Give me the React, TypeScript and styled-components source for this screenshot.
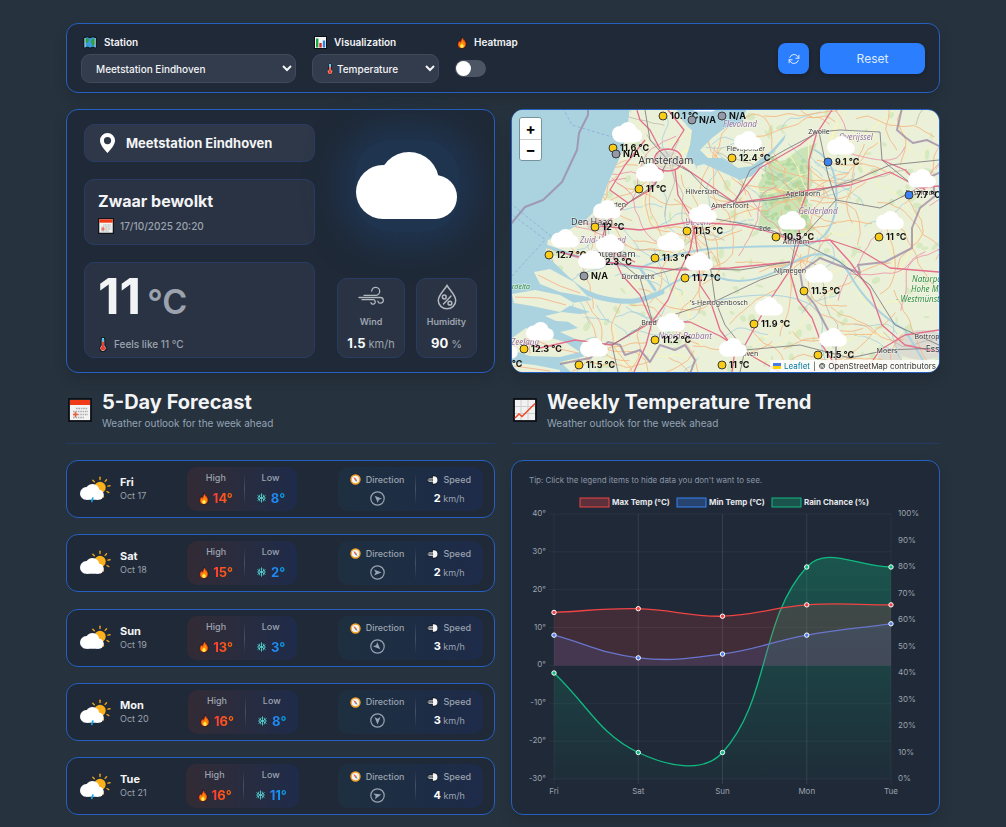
import React from 'react';
import styled, { createGlobalStyle } from 'styled-components';

const GlobalStyle = createGlobalStyle`
  *, *::before, *::after { box-sizing: border-box; }
  body {
    margin: 0;
    min-height: 100vh;
    background: #26323d;
    color: #f3f4f6;
    font-family: Inter, "Liberation Sans", sans-serif;
    font-size: 11px;
  }
  h1, h2, p, ul { margin: 0; padding: 0; }
  button, select, input { font-family: inherit; }
  svg { display: block; flex: none; }
`;

const Page = styled.main`
  display: flex;
  flex-direction: column;
  gap: 16px;
  padding: 23px 66px 12px;
`;

const Panel = styled.section`
  background: #1f2937;
  border: 1px solid #2560c0;
  border-radius: 12px;
  box-shadow: 0 6px 14px rgba(0, 0, 0, 0.14);
`;

/* ---------- toolbar ---------- */

const Toolbar = styled(Panel)`
  display: flex;
  align-items: center;
  gap: 16px;
  padding: 10px 14px 9px;
`;

const Field = styled.div<{ $width?: number }>`
  display: flex;
  flex-direction: column;
  gap: 4px;
  width: ${(p) => (p.$width ? `${p.$width}px` : 'auto')};
`;

const FieldLabel = styled.label`
  display: flex;
  align-items: center;
  gap: 7px;
  height: 16px;
  padding-left: 2px;
  font-weight: 600;
  font-size: 10px;
`;

const SelectWrap = styled.div`
  position: relative;
`;

const SelectIcon = styled.span`
  position: absolute;
  left: 14px;
  top: 9px;
  pointer-events: none;
`;

const Select = styled.select<{ $icon?: boolean }>`
  width: 100%;
  height: 29px;
  padding: 0 0 0 ${(p) => (p.$icon ? 20 : 10)}px;
  border: 1px solid #3f4a5b;
  border-radius: 9px;
  background-color: #323c4d;
  color: #f3f4f6;
  font-size: 10px;
  font-weight: 500;
`;

const ToggleSlot = styled.div`
  display: flex;
  align-items: center;
  height: 29px;
`;

const Toggle = styled.input`
  appearance: none;
  width: 31px;
  height: 17px;
  margin: 0;
  padding: 1px;
  border-radius: 9px;
  background: #4b5563;
  &::before {
    content: '';
    display: block;
    width: 15px;
    height: 15px;
    border-radius: 50%;
    background: #fff;
  }
  &:checked { background: #2b7fff; }
  &:checked::before { margin-left: 14px; }
`;

const Actions = styled.div`
  display: flex;
  gap: 11px;
  margin-left: auto;
`;

const Button = styled.button<{ $wide?: boolean }>`
  display: flex;
  align-items: center;
  justify-content: center;
  width: ${(p) => (p.$wide ? 105 : 31)}px;
  height: 31px;
  padding: 0;
  border: 0;
  border-radius: 8px;
  background: #2b7fff;
  color: #dce8ff;
  font-size: 12px;
  font-weight: 400;
  box-shadow: 0 2px 4px rgba(0, 0, 0, 0.2);
`;

/* ---------- layout of the two columns ---------- */

const Columns = styled.div`
  display: grid;
  grid-template-columns: minmax(0, 1fr) minmax(0, 1fr);
  gap: 16px;
`;

/* ---------- current weather ---------- */

const Current = styled(Panel)`
  display: flex;
  justify-content: space-between;
  gap: 22px;
  padding: 14px 17px;
`;

const CurrentLeft = styled.div`
  display: flex;
  flex-direction: column;
  flex: 1;
  gap: 17px;
`;

const CurrentRight = styled.div`
  display: flex;
  flex-direction: column;
  justify-content: space-between;
  width: 140px;
`;

const Tile = styled.div`
  display: flex;
  flex-direction: column;
  justify-content: center;
  padding: 0 13px;
  background: #2a3343;
  border: 1px solid #293d63;
  border-radius: 10px;
`;

const StationTile = styled(Tile)`
  flex-direction: row;
  align-items: center;
  justify-content: flex-start;
  gap: 9px;
  height: 38px;
  background: #2e3848;
  font-size: 13px;
  font-weight: 700;
`;

const SkyTile = styled(Tile)`
  height: 66px;
  gap: 6px;
`;

const TempTile = styled(Tile)`
  height: 96px;
  gap: 6px;
`;

const SkyName = styled.h1`
  font-size: 16px;
  line-height: 22px;
  font-weight: 700;
`;

const Muted = styled.p`
  display: flex;
  align-items: center;
  gap: 6px;
  line-height: 16px;
  color: #9ca3af;
  font-size: 10px;
  font-weight: 500;
`;

const Temp = styled.p`
  display: flex;
  align-items: baseline;
  gap: 6px;
  line-height: 56px;
  font-size: 50px;
  font-weight: 700;
`;

const TempUnit = styled.span`
  color: #9ca3af;
  font-size: 34px;
  font-weight: 600;
`;

const Glow = styled.div`
  display: flex;
  align-items: center;
  justify-content: center;
  height: 92px;
  margin: 16px 18px 0;
  border-radius: 36px;
  background: #1f344f;
  box-shadow: 0 0 32px 16px #1f344f;
`;

const Stats = styled.div`
  display: flex;
  justify-content: space-between;
`;

const Stat = styled(Tile)<{ $width: number }>`
  align-items: center;
  justify-content: flex-start;
  gap: 6px;
  width: ${(p) => p.$width}px;
  height: 80px;
  padding: 5px 0 0;
`;

const StatLabel = styled.span`
  color: #9ca3af;
  font-size: 9px;
  line-height: 12px;
  font-weight: 600;
`;

const StatValue = styled.span`
  color: #9ca3af;
  font-size: 11px;
  line-height: 18px;
  strong {
    color: #f9fafb;
    font-size: 13px;
    font-weight: 700;
  }
`;

/* ---------- map ---------- */

const MapPanel = styled(Panel)`
  position: relative;
  overflow: hidden;
  height: 264px;
`;

const MapSvg = styled.svg`
  width: 100%;
  height: 100%;
`;

const ZoomControl = styled.div`
  position: absolute;
  top: 7px;
  left: 7px;
  display: flex;
  flex-direction: column;
  border: 1px solid rgba(0, 0, 0, 0.3);
  border-radius: 3px;
  overflow: hidden;
`;

const ZoomButton = styled.button`
  width: 21px;
  height: 21px;
  padding: 0;
  border: 0;
  background: #fff;
  color: #000;
  font-size: 15px;
  line-height: 18px;
  font-weight: 700;
  & + & { border-top: 1px solid #ccc; }
`;

const Attribution = styled.div`
  position: absolute;
  right: 0;
  bottom: 0;
  display: flex;
  align-items: center;
  gap: 3px;
  height: 12px;
  padding: 0 3px;
  background: rgba(255, 255, 255, 0.8);
  color: #333;
  font-size: 8px;
  a { color: #0078a8; text-decoration: none; }
`;

/* ---------- section headings ---------- */

const SectionHead = styled.header`
  display: flex;
  align-items: center;
  gap: 10px;
  height: 55px;
  padding: 0 2px 12px;
  border-bottom: 1px solid #253a60;
`;

const SectionTitle = styled.h2`
  font-size: 20px;
  line-height: 26px;
  font-weight: 700;
`;

const SectionSub = styled.p`
  color: #94a3b5;
  font-size: 10px;
  line-height: 16px;
`;

/* ---------- forecast ---------- */

const Forecast = styled.ul`
  display: flex;
  flex-direction: column;
  justify-content: space-between;
  gap: 16px;
  list-style: none;
`;

const Day = styled(Panel).attrs({ as: 'li' })`
  display: flex;
  align-items: center;
  justify-content: space-between;
  height: 58px;
  padding: 0 11px 0 13px;
  box-shadow: none;
`;

const DayInfo = styled.div`
  display: flex;
  align-items: center;
  gap: 9px;
`;

const DayName = styled.p`
  font-size: 11px;
  line-height: 14px;
  font-weight: 700;
`;

const DayDate = styled.p`
  color: #9ca3af;
  font-size: 9px;
  line-height: 14px;
`;

const Pair = styled.div<{ $kind: 'temp' | 'wind' }>`
  display: flex;
  align-items: center;
  gap: 11px;
  height: 44px;
  padding: 0 12px;
  border-radius: 10px;
  background: ${(p) =>
    p.$kind === 'temp'
      ? 'linear-gradient(90deg, #322b35, #282c40 55%, #1e2b4a)'
      : 'linear-gradient(90deg, #1e2f40, #1d2d44 50%, #1e2b4a)'};
`;

const Divider = styled.span`
  width: 1px;
  height: 32px;
  background: linear-gradient(rgba(107, 114, 128, 0), #465066, rgba(107, 114, 128, 0));
`;

const Metric = styled.div`
  display: flex;
  flex-direction: column;
  align-items: center;
  gap: 4px;
`;

const MetricLabel = styled.span`
  display: flex;
  align-items: center;
  gap: 5px;
  color: #9ca3af;
  font-size: 9px;
  line-height: 14px;
  font-weight: 500;
`;

const Degrees = styled.span<{ $from: string; $to: string }>`
  display: flex;
  align-items: center;
  gap: 4px;
  font-size: 13px;
  line-height: 18px;
  font-weight: 700;
  b {
    font-weight: 700;
    color: transparent;
    background: linear-gradient(90deg, ${(p) => p.$from}, ${(p) => p.$to});
    background-clip: text;
  }
`;

const Speed = styled.span`
  color: #9ca3af;
  font-size: 9px;
  line-height: 15px;
  strong { color: #fff; font-size: 11px; }
`;

/* ---------- chart ---------- */

const ChartPanel = styled(Panel)`
  display: flex;
  flex-direction: column;
  padding: 12px 17px 16px;
`;

const Tip = styled.p`
  color: #8d97a6;
  font-size: 8px;
  line-height: 14px;
`;

const ChartSvg = styled.svg`
  width: 100%;
  height: auto;
  margin-top: 7px;
`;

/* ---------- icons ---------- */

const CloudShape = () => (
  <>
    <circle cx="27" cy="40" r="27" />
    <circle cx="53" cy="30" r="30" />
    <circle cx="79" cy="45" r="22" />
    <rect x="27" y="40" width="52" height="27" />
  </>
);

const MapIcon = () => (
  <svg width="14" height="13" viewBox="0 0 14 13">
    <path d="M1 1.5 4.5.8 7 1.8 9.6.8 13 1.5V12l-3.4-.8L7 12.2l-2.5-1L1 12z" fill="#3b9be0" stroke="#0b0f14" strokeWidth="1" />
    <path d="M2 3 4.5 2l1.7 1.2L5.3 6 3.5 7.4 2 5.5zM8 4.5 10 2.5l2.2.7v4L10.6 10 8.8 8.6zM4 9l1.6.6L5 11z" fill="#2f9e44" />
    <path d="M2 2v9.5M12.2 2v9.5" stroke="#d8ecf8" strokeWidth=".8" />
  </svg>
);

const BarsIcon = () => (
  <svg width="13" height="13" viewBox="0 0 13 13">
    <rect x=".5" y=".5" width="12" height="12" fill="#f4f4f4" stroke="#0b0f14" />
    <rect x="2" y="2.5" width="2.4" height="9" fill="#16a34a" />
    <rect x="5.3" y="7" width="2.4" height="4.5" fill="#dc2626" />
    <rect x="8.8" y="4.5" width="2.4" height="7" fill="#2584dd" />
  </svg>
);

const FireIcon = ({ size = 10 }: { size?: number }) => (
  <svg width={size} height={size * 1.3} viewBox="0 0 10 13">
    <path d="M4.600.6C5.400 2.600 8 3.600 9 6.200c1 3-.7 6.300-4 6.300S0 10.200.7 7.400C1 6 1.700 5.400 2 4.200c.7.300 1 .8 1.100 1.400C4 4.200 4.900 2.500 4.600.6z" fill="#f4511e" stroke="#10151c" strokeWidth=".7" />
    <path d="M5.200 3.500C6 5.500 8 6 8 8.500c0 2-1.300 3.300-3 3.300s-3-1.300-3-3.300c0-1 .4-1.500.8-2.300.5.5.7.900.8 1.300.900-.8 1.700-2.200 1.600-4z" fill="#fb8c00" />
    <path d="M5 7.500c.5 1 1.700 1.300 1.700 2.600 0 1-.7 1.800-1.700 1.800s-1.800-.8-1.800-1.800c0-1.100 1.300-1.600 1.800-2.600z" fill="#ffee58" />
  </svg>
);

const ThermoIcon = ({ small }: { small?: boolean }) => (
  <svg width={small ? 8 : 10} height={small ? 12 : 15} viewBox="-1 0 9 14">
    <path d="M1.800 8V2a1.700 1.700 0 0 1 3.400 0v6a3 3 0 1 1-3.400 0z" fill="#eef2f6" stroke="#0d1117" strokeWidth="1" />
    <path d="M3.500 1.200v3.300" stroke="#35c3e8" strokeWidth="1.800" />
    <path d="M3.500 4.500v6" stroke="#f0392b" strokeWidth="1.800" />
    <circle cx="3.500" cy="10.600" r="2.100" fill="#f0392b" />
  </svg>
);

const CalendarIcon = ({ size }: { size: number }) => (
  <svg width={size} height={size} viewBox="0 0 24 24">
    <rect x="1" y="1" width="22" height="22" fill="#f3f3f3" stroke="#0b0f14" strokeWidth="1.800" />
    <rect x="2" y="2" width="20" height="5" fill="#f03a17" />
    <path d="M8 10.500h12M5 13.500h15M5 16.500h15M5 19.500h11" stroke="#a9a9a9" strokeWidth="1.600" strokeDasharray="1.600 .8" />
    <path d="M5 16.500h5M7.500 14v5" stroke="#ef5a3c" strokeWidth="1.600" />
  </svg>
);

const TrendIcon = () => (
  <svg width="24" height="24" viewBox="0 0 24 24">
    <rect x="1" y="1" width="22" height="22" fill="#f1f1f1" stroke="#0b0f14" strokeWidth="1.800" />
    <path d="M8 2v20M15 2v20M2 8.500h20M2 15.500h20" stroke="#cfcfcf" strokeWidth="1" />
    <path d="M2 20l4-4 3 2.500L22 5.500" fill="none" stroke="#f04a23" strokeWidth="1.500" />
  </svg>
);

const SnowIcon = () => (
  <svg width="11" height="12" viewBox="0 0 12 12">
    {[0, 60, 120].map((a) => (
      <path key={a} d="M6 .8v10.400M4.300 2 6 3.700 7.700 2M4.300 10 6 8.300 7.700 10" fill="none" stroke="#0b1017" strokeWidth="2.200" transform={`rotate(${a} 6 6)`} />
    ))}
    {[0, 60, 120].map((a) => (
      <path key={a} d="M6 .8v10.400M4.300 2 6 3.700 7.700 2M4.300 10 6 8.300 7.700 10" fill="none" stroke="#5fd3dc" strokeWidth=".9" transform={`rotate(${a} 6 6)`} />
    ))}
  </svg>
);

const CompassIcon = () => (
  <svg width="11" height="11" viewBox="0 0 11 11">
    <circle cx="5.500" cy="5.500" r="4.500" fill="#f6f2ea" stroke="#f4a127" strokeWidth="1.400" />
    <path d="M3.500 3 6.200 5 5 6.200z" fill="#e53935" />
    <path d="M7.500 8 4.900 6.200 6.200 5z" fill="#64748b" />
  </svg>
);

const PuffIcon = () => (
  <svg width="11" height="10" viewBox="0 0 11 10">
    <path d="M5 .5h1.500a4.500 4.500 0 0 1 0 9H5z" fill="#0b1017" />
    <path d="M5.800 1.200h.9a3.800 3.800 0 0 1 0 7.600h-.9z" fill="#f6f6f6" />
    <path d="M.5 5h5" stroke="#0b1017" strokeWidth="4.500" />
    <path d="M1.500 3.800h4.500M.5 5.100h5M1.500 6.400h4.500" stroke="#c3c8ce" strokeWidth="1" />
  </svg>
);

const RefreshIcon = () => (
  <svg width="12" height="12" viewBox="0 0 16 16" fill="none" stroke="#e3edff" strokeWidth="1.300" strokeLinecap="round" strokeLinejoin="round">
    <path d="M14.500 3v4h-4M1.500 13V9h4" />
    <path d="M2.300 6a6 6 0 0 1 10.300-1.800L14.500 7M1.500 9l1.900 2.800A6 6 0 0 0 13.700 10" />
  </svg>
);

const PinIcon = () => (
  <svg width="19" height="20" viewBox="0 0 19 20">
    <path fillRule="evenodd" fill="#fff" d="M9.500 0A7.500 7.500 0 0 0 2 7.500C2 12 6.500 16.500 9.500 20c3-3.500 7.500-8 7.500-12.500A7.500 7.500 0 0 0 9.500 0zm0 4a3.600 3.600 0 1 1 0 7.200 3.600 3.600 0 0 1 0-7.200z" />
  </svg>
);

const WindIcon = () => (
  <svg width="26" height="26" viewBox="0 0 26 26" fill="none" stroke="#b3b8bf" strokeWidth="1.300" strokeLinecap="round">
    <path d="M6 11.300h11.500a4 4 0 1 0-3.800-4.300M1 13.500h21.500a2.800 2.800 0 1 1-2.700 3.600M4 15.700h11a2.200 2.200 0 1 1-2 3" />
  </svg>
);

const HumidityIcon = () => (
  <svg width="26" height="26" viewBox="0 0 26 26" fill="none" stroke="#b3b8bf" strokeWidth="1.500" strokeLinecap="round">
    <path d="M13 1.500C10 6.500 4.300 11 4.300 16.500a8.700 8.300 0 0 0 17.400 0C21.700 11 16 6.500 13 1.500z" />
    <path d="M17 12 9.500 20" />
    <circle cx="10.300" cy="13" r="1.900" />
    <circle cx="15.900" cy="19.200" r="1.900" />
  </svg>
);

const BigCloud = () => (
  <svg width="102" height="68" viewBox="0 0 102 68" fill="#fff"><CloudShape /></svg>
);

const SunCloud = ({ rain }: { rain: boolean }) => (
  <svg width="31" height="28" viewBox="0 0 31 28">
    <circle cx="20" cy="12.500" r="5.700" fill="#fbb11c" />
    {[-90, -50, -135, -10, 30, 70].map((a) => (
      <path key={a} d="M28 12.500h2.200" stroke="#f0a31a" strokeWidth="1.400" strokeLinecap="round" transform={`rotate(${a} 20 12.500)`} />
    ))}
    <g transform="translate(0 9) scale(.235)" fill="#fff"><CloudShape /></g>
    {rain && <path d="M12.800 23 11.800 26.500" stroke="#0ea5e9" strokeWidth="1.600" strokeLinecap="round" />}
  </svg>
);

const DirectionIcon = ({ angle }: { angle: number }) => (
  <svg width="15" height="15" viewBox="0 0 15 15">
    <circle cx="7.500" cy="7.500" r="6.700" fill="none" stroke="#9aa4b2" strokeWidth="1.200" />
    <path d="M7.500 3.500 10.500 11 7.500 9.300 4.500 11z" fill="#9aa4b2" transform={`rotate(${angle} 7.500 7.500)`} />
  </svg>
);

/* ---------- map data ---------- */

const random = (seed: number) => () => {
  seed = (seed * 1664525 + 1013904223) % 4294967296;
  return seed / 4294967296;
};

const wander = (seed: number, count: number, steps: number, stride: number) => {
  const r = random(seed);
  const lines: string[] = [];
  for (let i = 0; i < count; i++) {
    let x = 520 + r() * 425;
    let y = 105 + r() * 270;
    let a = r() * 6.28;
    let d = `M${x.toFixed(1)} ${y.toFixed(1)}`;
    for (let s = 0; s < steps; s++) {
      a += (r() - 0.5) * 1.1;
      const mx = x + Math.cos(a) * stride;
      const my = y + Math.sin(a) * stride;
      a += (r() - 0.5) * 0.9;
      x = mx + Math.cos(a) * stride;
      y = my + Math.sin(a) * stride;
      d += `Q${mx.toFixed(1)} ${my.toFixed(1)} ${x.toFixed(1)} ${y.toFixed(1)}`;
    }
    lines.push(d);
  }
  return lines.join('');
};

const patchRand = random(77);
const PATCHES = Array.from({ length: 190 }, () => ({
  x: 515 + patchRand() * 425,
  y: 110 + patchRand() * 262,
  rx: 1 + patchRand() * 5,
  ry: 1 + patchRand() * 3,
  a: patchRand() * 180,
}));

const FOREST = Array.from({ length: 90 }, () => ({
  x: 762 + patchRand() * 48,
  y: 158 + patchRand() * 74,
  rx: 1 + patchRand() * 3,
  ry: 1 + patchRand() * 2,
}));

const MINOR = wander(5, 100, 7, 6);
const WHITE_ROADS = wander(19, 60, 5, 5);
const STREAMS = wander(42, 60, 6, 4);
const GREY_ROADS = wander(91, 14, 8, 6);
const RED_ROADS = wander(33, 16, 6, 7);

const MOTORWAYS = [
  'M654 160Q656 149 668 149Q682 150 682 161Q680 171 667 171Q655 170 654 160',
  'M664 171L650 190 628 203 606 224 602 240 612 252 635 262',
  'M675 170L678 195 690 215 695 235 699 262 700 285 710 300 720 330 735 350 732 372',
  'M682 166L705 182 735 203 770 198 810 190 850 185 890 172 920 188 939 186',
  'M600 226L640 230 690 222 740 225 770 232 800 243 830 240 860 250 890 268 939 272',
  'M698 215L735 200 760 168 800 145 819 130 832 110',
  'M817 132L809 160 808 190 798 216 800 240 790 270 770 300 745 345',
  'M612 254L622 275 640 295 652 322 612 345 575 340 540 348 524 342',
  'M695 225L690 250 678 275 668 300 652 322 646 345 634 372',
  'M652 322L690 322 720 336 745 352 780 372',
  'M790 272L798 300 812 318 822 345 840 372',
  'M560 252L590 260 635 266 680 270 730 268 790 262',
  'M660 149L650 130 640 120 637 110M672 149L684 130 668 110',
  'M830 240L850 262 870 290 882 325 905 345 939 352',
  'M865 372L880 350 905 335 939 330M882 160L905 170 925 190',
  'M628 203L610 190 625 165 645 140',
];

const RAILS = [
  'M668 160L655 185 632 200 606 222 605 250 640 278 652 320 612 345 618 372',
  'M668 160L690 172 705 188 735 203 770 200 803 195 850 182 890 165 939 160',
  'M735 203L750 170 785 150 819 132 840 130 880 132 882 160 925 195',
  'M700 216L708 250 715 300 725 325 745 350 740 372',
  'M700 216L765 228 796 240 790 270 760 280 718 300 652 322',
  'M796 240L840 262 870 285 895 325 939 345M819 132L828 175 836 200 800 240',
  'M640 278L680 268 740 270 790 262M836 200L880 208 915 190',
  'M745 350L800 345 850 358 887 350 939 348M668 160L650 140 645 110',
];

const PLACES = [
  { x: 666, y: 164, t: 'Amsterdam', s: 10 },
  { x: 702, y: 194, t: 'Hilversum', s: 7 },
  { x: 730, y: 208, t: 'Amersfoort', s: 7 },
  { x: 615, y: 207, t: 'Leiden', s: 7 },
  { x: 592, y: 225, t: 'Den Haag', s: 9 },
  { x: 613, y: 257, t: 'Rotterdam', s: 9 },
  { x: 638, y: 279, t: 'Dordrecht', s: 7 },
  { x: 719, y: 305, t: "'s-Hertogenbosch", s: 7 },
  { x: 651, y: 325, t: 'Breda', s: 7 },
  { x: 819, y: 134, t: 'Zwolle', s: 7 },
  { x: 746, y: 151, t: 'Flevopolder', s: 7 },
  { x: 803, y: 196, t: 'Apeldoorn', s: 7 },
  { x: 765, y: 231, t: 'Ede', s: 7 },
  { x: 796, y: 244, t: 'Arnhem', s: 7 },
  { x: 790, y: 273, t: 'Nijmegen', s: 7 },
  { x: 921, y: 195, t: 'Enschede', s: 7 },
  { x: 741, y: 356, t: 'Eindhoven', s: 7 },
  { x: 887, y: 353, t: 'Moers', s: 7 },
  { x: 927, y: 339, t: 'Bottrop', s: 7 },
  { x: 938, y: 352, t: 'Essen', s: 9 },
];

const REGIONS = [
  { x: 740, y: 127, t: 'Flevoland' },
  { x: 856, y: 140, t: 'Overijssel' },
  { x: 818, y: 214, t: 'Gelderland' },
  { x: 603, y: 243, t: 'Zuid-Holland' },
  { x: 698, y: 225, t: 'Utrecht' },
  { x: 685, y: 339, t: 'Noord-Brabant' },
  { x: 525, y: 345, t: 'Zeeland' },
];

const STATIONS: [number, number, string, string][] = [
  [663, 116, '10.1 °C', 'warm'],
  [692, 120, 'N/A', 'none'],
  [722, 116, 'N/A', 'none'],
  [613, 148, '11.6 °C', 'warm'],
  [616, 154, 'N/A', 'none'],
  [639, 189, '11 °C', 'warm'],
  [595, 227, '12 °C', 'warm'],
  [687, 231, '11.5 °C', 'warm'],
  [549, 255, '12.7 °C', 'warm'],
  [594, 262, '12.3 °C', 'warm'],
  [584, 276, 'N/A', 'none'],
  [655, 258, '11.3 °C', 'warm'],
  [685, 278, '11.7 °C', 'warm'],
  [524, 349, '12.3 °C', 'warm'],
  [579, 365, '11.5 °C', 'warm'],
  [655, 340, '11.2 °C', 'warm'],
  [722, 365, '11 °C', 'warm'],
  [732, 158, '12.4 °C', 'warm'],
  [828, 162, '9.1 °C', 'cold'],
  [909, 195, '7.7 °C', 'cold'],
  [776, 237, '10.5 °C', 'warm'],
  [879, 237, '11 °C', 'warm'],
  [804, 291, '11.5 °C', 'warm'],
  [754, 324, '11.9 °C', 'warm'],
  [818, 355, '11.5 °C', 'warm'],
  [487, 364, '12.1 °C', 'warm'],
];

const CLOUDS = [
  [627, 133], [650, 172], [607, 209], [703, 213], [565, 238], [610, 243], [592, 259],
  [671, 241], [699, 261], [540, 331], [594, 347], [671, 322], [733, 347], [748, 140],
  [841, 145], [922, 178], [792, 220], [890, 220], [819, 273], [769, 306], [833, 337],
  [504, 349], [704, 102],
];

const DOT: Record<string, string> = { warm: '#facc15', cold: '#3b82f6', none: '#9399a8' };

const WeatherMap = () => (
  <MapPanel aria-label="Station map">
    <MapSvg viewBox="512 110 427 262" preserveAspectRatio="xMidYMid slice">
      <rect x="0" y="0" width="1500" height="600" fill="#ebf0d8" />
      <g fill="#cfe6b8" opacity=".7">
        {PATCHES.map((p, i) => (
          <ellipse key={i} cx={p.x} cy={p.y} rx={p.rx} ry={p.ry} transform={`rotate(${p.a} ${p.x} ${p.y})`} />
        ))}
      </g>
      <g fill="#dcdbd2">
        <ellipse cx="667" cy="160" rx="14" ry="9" />
        <ellipse cx="610" cy="254" rx="17" ry="6" />
        <ellipse cx="597" cy="224" rx="11" ry="8" />
        <ellipse cx="698" cy="216" rx="9" ry="7" />
        <ellipse cx="740" cy="350" rx="9" ry="7" />
        <ellipse cx="796" cy="240" rx="9" ry="5" />
        <ellipse cx="922" cy="345" rx="28" ry="15" />
        <ellipse cx="890" cy="358" rx="12" ry="10" />
      </g>
      <path d="M770 163L785 160 800 149 817 143 810 160 813 183 803 205 815 230 790 236 780 228 757 231 762 205 758 185z" fill="#cbe4b6" />
      <g fill="#b4d8a2">{FOREST.map((f, i) => <ellipse key={i} cx={f.x} cy={f.y} rx={f.rx} ry={f.ry} />)}</g>
      <path d={STREAMS} fill="none" stroke="#a5cfdf" strokeWidth=".8" />
      <path d={WHITE_ROADS} fill="none" stroke="#fbf6b8" strokeWidth=".9" />
      <path d={MINOR} fill="none" stroke="#f5b984" strokeWidth=".9" />
      <path d={GREY_ROADS} fill="none" stroke="#b9b2a8" strokeWidth=".7" />
      <path d={RED_ROADS} fill="none" stroke="#ec9aaa" strokeWidth=".9" />

      <g fill="#aad3df">
        <path d="M505 105H630L627 133 620 157 608 183 600 205 585 221 565 232 548 240 545 255 548 262 575 286 592 300 565 304 590 312 562 318 578 328 560 332 582 342 586 356 560 362 580 380H505z" />
        <path d="M674 105L682 120 692 130 690 145 686 158 697 166 704 164 722 172 740 180 752 176 765 162 784 140 786 134 772 150 752 166 738 168 722 158 708 158 700 150 712 138 725 128 742 122 748 105z" />
      </g>
      <g fill="none" stroke="#aad3df" strokeLinecap="round">
        <path d="M545 258C565 275 575 292 602 298S640 302 662 292" strokeWidth="5" />
        <path d="M546 246L575 256 605 262 640 268 655 290" strokeWidth="3" />
        <path d="M660 292Q690 268 720 278T790 264T850 275T905 330L930 372" strokeWidth="2" />
        <path d="M640 268Q680 250 720 248T796 246T836 205T815 150" strokeWidth="2" />
        <path d="M720 300Q770 290 800 300T820 340L828 372" strokeWidth="1" />
      </g>
      <g fill="#ebf0d8">
        <path d="M534 272L550 269 574 282 588 297 560 292 540 284z" />
        <path d="M512 294L535 290 560 295 574 303 560 312 532 306 514 303z" />
        <path d="M545 316L562 312 588 315 575 322 556 321z" />
        <path d="M512 338L526 328 545 336 565 342 580 352 560 357 530 356 512 350z" />
        <path d="M508 362L535 365 560 370 560 380 508 380z" />
      </g>
      <g fill="none" stroke="#f6b48c" strokeWidth=".9">
        <path d="M538 275L560 286 580 293M515 297L540 298 566 305M516 344L530 338 555 348 578 353M514 366L550 371M528 330L530 354" />
      </g>

      <g fill="none" stroke="#9b86a6" strokeOpacity=".75" strokeWidth="2" strokeLinejoin="round">
        <path d="M588 108L588 115 579 133 577 150 562 182 543 200 525 207 510 225" />
        <path d="M902 108L897 130 905 137 913 143 927 140 941 147M941 172L932 176 935 196 920 208 912 228 912 248 885 262 858 265 860 273 835 264 820 258 800 272 803 290 815 305 828 330 836 345 836 374" />
        <path d="M560 364L590 358 608 342 620 345 625 355 640 350 650 362 660 345 675 350 685 345 695 360 690 374" />
      </g>
      <g fill="none" stroke="#8b9ed6" strokeOpacity=".8" strokeWidth=".8" strokeDasharray="3 2">
        <path d="M563 108L572 125 612 137M510 203L552 237M510 213L546 240M512 276L545 240" />
      </g>
      <g fill="none" stroke="#e36f8b" strokeWidth="1.300" strokeLinejoin="round">
        {MOTORWAYS.map((d) => <path key={d} d={d} />)}
      </g>
      <g fill="none" stroke="#77747a" strokeOpacity=".8" strokeWidth="1" strokeLinejoin="round">
        {RAILS.map((d) => <path key={d} d={d} />)}
      </g>

      <g fontFamily='"Noto Sans", sans-serif' textAnchor="middle" paintOrder="stroke" stroke="#fff" strokeOpacity=".6" strokeWidth="1">
        <g fill="#3a3a3a">
          {PLACES.map((p) => <text key={p.t} x={p.x} y={p.y} fontSize={p.s}>{p.t}</text>)}
        </g>
        <g fill="#92739f" fontStyle="italic" fontSize="8">
          {REGIONS.map((p) => <text key={p.t} x={p.x} y={p.y}>{p.t}</text>)}
        </g>
        <g fill="#2e8b3a" fontStyle="italic" fontSize="8" textAnchor="start">
          <text x="530" y="289" textAnchor="end" fontSize="7">Voordelta</text>
          <text x="912" y="282">Naturpark</text>
          <text x="911" y="292">Hohe Mark</text>
          <text x="896" y="302">- Westmünsterland</text>
        </g>
      </g>

      <g fontFamily="Inter, sans-serif" fontWeight="700" fontSize="9" fill="#111">
        {STATIONS.map(([x, y, t]) => <text key={`${x}-${y}`} x={x + 7} y={y + 3}>{t}</text>)}
      </g>
      {STATIONS.map(([x, y, , kind]) => (
        <circle key={`${x}-${y}`} cx={x} cy={y} r="4" fill={DOT[kind]} stroke="#3b3b36" strokeWidth="1" />
      ))}
      <g fill="#fff">
        {CLOUDS.map(([x, y]) => (
          <g key={`${x}-${y}`} transform={`translate(${x - 14} ${y - 9}) scale(.275)`}><CloudShape /></g>
        ))}
        <g transform="translate(612 122) scale(.3)"><CloudShape /></g>
      </g>
    </MapSvg>
    <ZoomControl>
      <ZoomButton type="button" aria-label="Zoom in">+</ZoomButton>
      <ZoomButton type="button" aria-label="Zoom out">−</ZoomButton>
    </ZoomControl>
    <Attribution>
      <svg width="8" height="6" viewBox="0 0 8 6"><path d="M0 0h8v3H0z" fill="#4c7be1" /><path d="M0 3h8v3H0z" fill="#ffd500" /></svg>
      <a href="#leaflet">Leaflet</a>
      <span>|</span>
      <span>© OpenStreetMap contributors</span>
    </Attribution>
  </MapPanel>
);

/* ---------- trend chart ---------- */

type Point = { x: number; y: number };

const DAYS = ['Fri', 'Sat', 'Sun', 'Mon', 'Tue'];
const PLOT = { left: 25, right: 362, top: 20, bottom: 285 };
const xAt = (i: number) => PLOT.left + ((PLOT.right - PLOT.left) * i) / 4;
const yTemp = (t: number) => PLOT.bottom - ((t + 30) / 70) * (PLOT.bottom - PLOT.top);
const yRain = (r: number) => PLOT.bottom - (r / 100) * (PLOT.bottom - PLOT.top);

const curve = (pts: Point[]) => {
  const cps = pts.map((p, i) => {
    const a = pts[i - 1] || p;
    const b = pts[i + 1] || p;
    const d0 = Math.hypot(p.x - a.x, p.y - a.y);
    const d1 = Math.hypot(b.x - p.x, b.y - p.y);
    const f0 = (0.4 * d0) / (d0 + d1);
    const f1 = (0.4 * d1) / (d0 + d1);
    return {
      inX: p.x - f0 * (b.x - a.x), inY: p.y - f0 * (b.y - a.y),
      outX: p.x + f1 * (b.x - a.x), outY: p.y + f1 * (b.y - a.y),
    };
  });
  return pts.reduce(
    (d, p, i) =>
      i === 0 ? `M${p.x} ${p.y}` : `${d}C${cps[i - 1].outX} ${cps[i - 1].outY} ${cps[i].inX} ${cps[i].inY} ${p.x} ${p.y}`,
    '',
  );
};

const SERIES = [
  { name: 'Rain Chance (%)', color: '#10b981', fill: 'url(#rain)', base: PLOT.bottom, pts: [40, 10, 10, 80, 80].map((v, i) => ({ x: xAt(i), y: yRain(v) })) },
  { name: 'Min Temp (°C)', color: '#4f7fe8', fill: 'rgba(59,130,246,.15)', base: yTemp(0), pts: [8, 2, 3, 8, 11].map((v, i) => ({ x: xAt(i), y: yTemp(v) })) },
  { name: 'Max Temp (°C)', color: '#ef4444', fill: 'rgba(239,68,68,.17)', base: yTemp(0), pts: [14, 15, 13, 16, 16].map((v, i) => ({ x: xAt(i), y: yTemp(v) })) },
];

const LEGEND = [
  { x: 51, name: 'Max Temp (°C)', color: '#ef4444' },
  { x: 148, name: 'Min Temp (°C)', color: '#3b82f6' },
  { x: 243, name: 'Rain Chance (%)', color: '#10b981' },
];

const TrendChart = () => (
  <ChartSvg viewBox="0 0 393 304" fontFamily='Inter, "Liberation Sans", sans-serif' fontSize="8" role="img" aria-label="Weekly temperature trend">
    <defs>
      <linearGradient id="rain" gradientUnits="userSpaceOnUse" x1="0" y1={PLOT.top} x2="0" y2={PLOT.bottom}>
        <stop offset="0" stopColor="#10b981" stopOpacity=".36" />
        <stop offset="1" stopColor="#10b981" stopOpacity=".03" />
      </linearGradient>
    </defs>
    {LEGEND.map((l) => (
      <g key={l.name}>
        <rect x={l.x} y="4" width="29" height="9" fill={l.color} fillOpacity=".3" stroke={l.color} strokeWidth="1" />
        <text x={l.x + 32} y="11" fontWeight="700" fill="#e5e7eb">{l.name}</text>
      </g>
    ))}
    {[40, 30, 20, 10, 0, -10, -20, -30].map((t) => (
      <g key={t}>
        <path d={`M${PLOT.left - 5} ${yTemp(t)}H${PLOT.right}`} stroke="#fff" strokeOpacity=".05" />
        <text x={PLOT.left - 8} y={yTemp(t) + 2} textAnchor="end" fill="#9ca3af">{t}°</text>
      </g>
    ))}
    {[0, 10, 20, 30, 40, 50, 60, 70, 80, 90, 100].map((r) => (
      <text key={r} x={PLOT.right + 7} y={yRain(r) + 2} fill="#9ca3af">{r}%</text>
    ))}
    {DAYS.map((d, i) => (
      <g key={d}>
        <path d={`M${xAt(i)} ${PLOT.top}V${PLOT.bottom + 5}`} stroke="#fff" strokeOpacity={i % 4 ? 0.1 : 0.05} />
        <text x={xAt(i)} y={PLOT.bottom + 15} textAnchor="middle" fill="#9ca3af">{d}</text>
      </g>
    ))}
    {SERIES.map((s) => (
      <g key={s.name}>
        <path d={`${curve(s.pts)}V${s.base}H${PLOT.left}z`} fill={s.fill} />
        <path d={curve(s.pts)} fill="none" stroke={s.color} strokeWidth="1.300" />
      </g>
    ))}
    {SERIES.map((s) => s.pts.map((p) => (
      <circle key={`${s.name}${p.x}`} cx={p.x} cy={p.y} r="2.200" fill={s.color} stroke="#fff" strokeWidth="1" />
    )))}
  </ChartSvg>
);

const FORECAST = [
  { day: 'Fri', date: 'Oct 17', high: 14, low: 8, speed: 2, angle: -45, rain: true },
  { day: 'Sat', date: 'Oct 18', high: 15, low: 2, speed: 2, angle: 90, rain: false },
  { day: 'Sun', date: 'Oct 19', high: 13, low: 3, speed: 3, angle: 135, rain: false },
  { day: 'Mon', date: 'Oct 20', high: 16, low: 8, speed: 3, angle: 180, rain: true },
  { day: 'Tue', date: 'Oct 21', high: 16, low: 11, speed: 4, angle: 75, rain: true },
];

export default function App() {
  return (
    <>
      <GlobalStyle />
      <Page>
        <Toolbar>
          <Field $width={215}>
            <FieldLabel htmlFor="station"><MapIcon />Station</FieldLabel>
            <Select id="station"><option>Meetstation Eindhoven</option></Select>
          </Field>
          <Field $width={127}>
            <FieldLabel htmlFor="view"><BarsIcon />Visualization</FieldLabel>
            <SelectWrap>
              <SelectIcon><ThermoIcon small /></SelectIcon>
              <Select id="view" $icon><option>Temperature</option></Select>
            </SelectWrap>
          </Field>
          <Field>
            <FieldLabel htmlFor="heatmap"><FireIcon />Heatmap</FieldLabel>
            <ToggleSlot><Toggle id="heatmap" type="checkbox" /></ToggleSlot>
          </Field>
          <Actions>
            <Button type="button" aria-label="Refresh"><RefreshIcon /></Button>
            <Button type="button" $wide>Reset</Button>
          </Actions>
        </Toolbar>

        <Columns>
          <Current>
            <CurrentLeft>
              <StationTile><PinIcon />Meetstation Eindhoven</StationTile>
              <SkyTile>
                <SkyName>Zwaar bewolkt</SkyName>
                <Muted><CalendarIcon size={16} />17/10/2025 20:20</Muted>
              </SkyTile>
              <TempTile>
                <Temp>11<TempUnit>°C</TempUnit></Temp>
                <Muted><ThermoIcon />Feels like 11 °C</Muted>
              </TempTile>
            </CurrentLeft>
            <CurrentRight>
              <Glow><BigCloud /></Glow>
              <Stats>
                <Stat $width={68}>
                  <WindIcon />
                  <StatLabel>Wind</StatLabel>
                  <StatValue><strong>1.5</strong> km/h</StatValue>
                </Stat>
                <Stat $width={61}>
                  <HumidityIcon />
                  <StatLabel>Humidity</StatLabel>
                  <StatValue><strong>90</strong> %</StatValue>
                </Stat>
              </Stats>
            </CurrentRight>
          </Current>
          <WeatherMap />

          <SectionHead>
            <CalendarIcon size={24} />
            <div>
              <SectionTitle>5-Day Forecast</SectionTitle>
              <SectionSub>Weather outlook for the week ahead</SectionSub>
            </div>
          </SectionHead>
          <SectionHead>
            <TrendIcon />
            <div>
              <SectionTitle>Weekly Temperature Trend</SectionTitle>
              <SectionSub>Weather outlook for the week ahead</SectionSub>
            </div>
          </SectionHead>

          <Forecast>
            {FORECAST.map((f) => (
              <Day key={f.day}>
                <DayInfo>
                  <SunCloud rain={f.rain} />
                  <div>
                    <DayName>{f.day}</DayName>
                    <DayDate>{f.date}</DayDate>
                  </div>
                </DayInfo>
                <Pair $kind="temp">
                  <Metric>
                    <MetricLabel>High</MetricLabel>
                    <Degrees $from="#ff3b3b" $to="#ff6a00"><FireIcon />
                      <b>{f.high}°</b></Degrees>
                  </Metric>
                  <Divider />
                  <Metric>
                    <MetricLabel>Low</MetricLabel>
                    <Degrees $from="#2b7fff" $to="#00a6e0"><SnowIcon /><b>{f.low}°</b></Degrees>
                  </Metric>
                </Pair>
                <Pair $kind="wind">
                  <Metric>
                    <MetricLabel><CompassIcon />Direction</MetricLabel>
                    <DirectionIcon angle={f.angle} />
                  </Metric>
                  <Divider />
                  <Metric>
                    <MetricLabel><PuffIcon />Speed</MetricLabel>
                    <Speed><strong>{f.speed}</strong> km/h</Speed>
                  </Metric>
                </Pair>
              </Day>
            ))}
          </Forecast>

          <ChartPanel>
            <Tip>Tip: Click the legend items to hide data you don't want to see.</Tip>
            <TrendChart />
          </ChartPanel>
        </Columns>
      </Page>
    </>
  );
}
